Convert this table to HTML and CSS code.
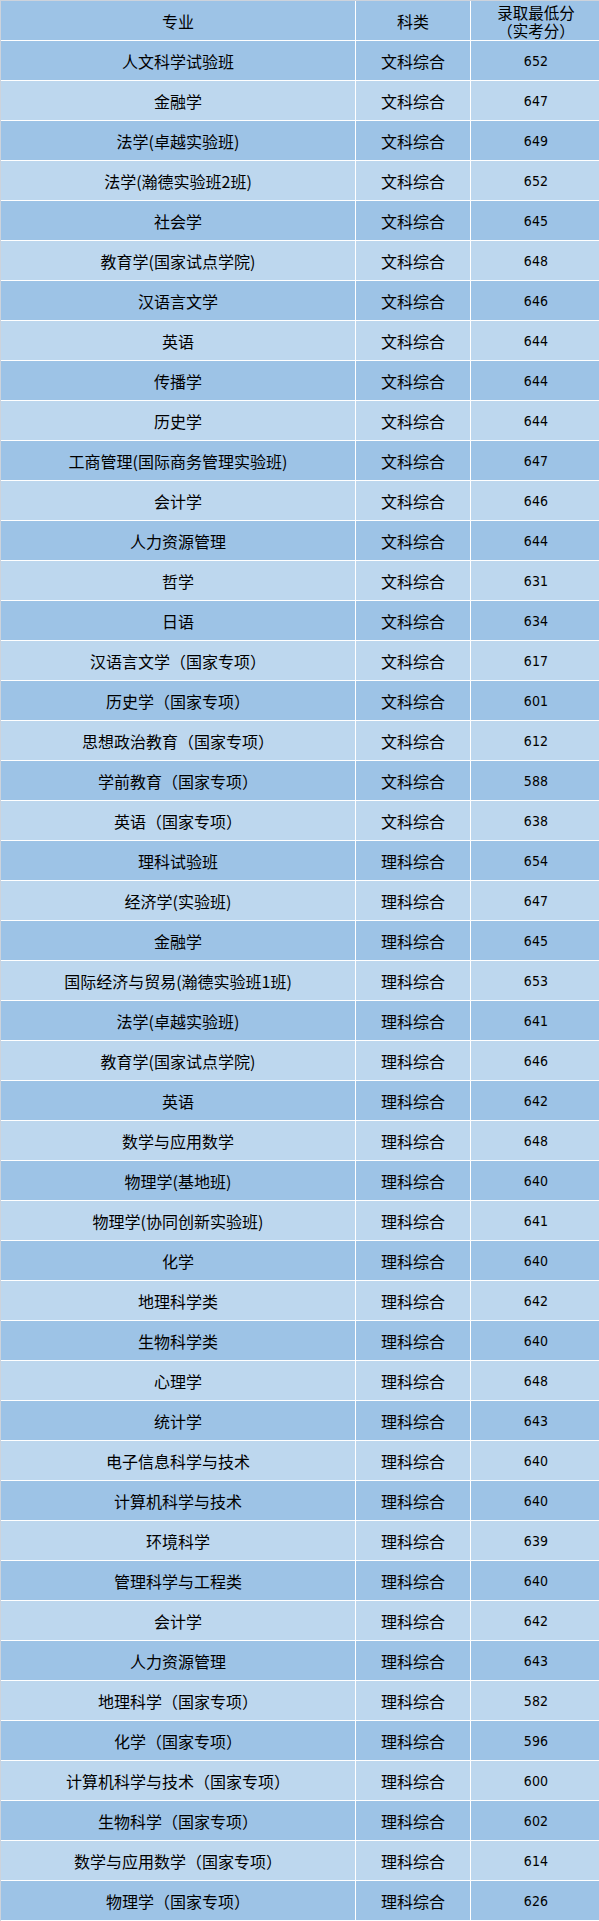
FILE: index.html
```html
<!DOCTYPE html>
<html lang="zh-CN">
<head>
<meta charset="utf-8">
<title>录取最低分</title>
<link rel="stylesheet" href="styles.css">
</head>
<body>
<div class="table">
  <div class="row head"><div class="cell">专业</div><div class="cell">科类</div><div class="cell two"><span class="line">录取最低分</span><span class="line">（实考分）</span></div></div>
  <div class="row"><div class="cell">人文科学试验班</div><div class="cell">文科综合</div><div class="cell num">652</div></div>
  <div class="row"><div class="cell">金融学</div><div class="cell">文科综合</div><div class="cell num">647</div></div>
  <div class="row"><div class="cell">法学(卓越实验班)</div><div class="cell">文科综合</div><div class="cell num">649</div></div>
  <div class="row"><div class="cell">法学(瀚德实验班2班)</div><div class="cell">文科综合</div><div class="cell num">652</div></div>
  <div class="row"><div class="cell">社会学</div><div class="cell">文科综合</div><div class="cell num">645</div></div>
  <div class="row"><div class="cell">教育学(国家试点学院)</div><div class="cell">文科综合</div><div class="cell num">648</div></div>
  <div class="row"><div class="cell">汉语言文学</div><div class="cell">文科综合</div><div class="cell num">646</div></div>
  <div class="row"><div class="cell">英语</div><div class="cell">文科综合</div><div class="cell num">644</div></div>
  <div class="row"><div class="cell">传播学</div><div class="cell">文科综合</div><div class="cell num">644</div></div>
  <div class="row"><div class="cell">历史学</div><div class="cell">文科综合</div><div class="cell num">644</div></div>
  <div class="row"><div class="cell">工商管理(国际商务管理实验班)</div><div class="cell">文科综合</div><div class="cell num">647</div></div>
  <div class="row"><div class="cell">会计学</div><div class="cell">文科综合</div><div class="cell num">646</div></div>
  <div class="row"><div class="cell">人力资源管理</div><div class="cell">文科综合</div><div class="cell num">644</div></div>
  <div class="row"><div class="cell">哲学</div><div class="cell">文科综合</div><div class="cell num">631</div></div>
  <div class="row"><div class="cell">日语</div><div class="cell">文科综合</div><div class="cell num">634</div></div>
  <div class="row"><div class="cell">汉语言文学（国家专项）</div><div class="cell">文科综合</div><div class="cell num">617</div></div>
  <div class="row"><div class="cell">历史学（国家专项）</div><div class="cell">文科综合</div><div class="cell num">601</div></div>
  <div class="row"><div class="cell">思想政治教育（国家专项）</div><div class="cell">文科综合</div><div class="cell num">612</div></div>
  <div class="row"><div class="cell">学前教育（国家专项）</div><div class="cell">文科综合</div><div class="cell num">588</div></div>
  <div class="row"><div class="cell">英语（国家专项）</div><div class="cell">文科综合</div><div class="cell num">638</div></div>
  <div class="row"><div class="cell">理科试验班</div><div class="cell">理科综合</div><div class="cell num">654</div></div>
  <div class="row"><div class="cell">经济学(实验班)</div><div class="cell">理科综合</div><div class="cell num">647</div></div>
  <div class="row"><div class="cell">金融学</div><div class="cell">理科综合</div><div class="cell num">645</div></div>
  <div class="row"><div class="cell">国际经济与贸易(瀚德实验班1班)</div><div class="cell">理科综合</div><div class="cell num">653</div></div>
  <div class="row"><div class="cell">法学(卓越实验班)</div><div class="cell">理科综合</div><div class="cell num">641</div></div>
  <div class="row"><div class="cell">教育学(国家试点学院)</div><div class="cell">理科综合</div><div class="cell num">646</div></div>
  <div class="row"><div class="cell">英语</div><div class="cell">理科综合</div><div class="cell num">642</div></div>
  <div class="row"><div class="cell">数学与应用数学</div><div class="cell">理科综合</div><div class="cell num">648</div></div>
  <div class="row"><div class="cell">物理学(基地班)</div><div class="cell">理科综合</div><div class="cell num">640</div></div>
  <div class="row"><div class="cell">物理学(协同创新实验班)</div><div class="cell">理科综合</div><div class="cell num">641</div></div>
  <div class="row"><div class="cell">化学</div><div class="cell">理科综合</div><div class="cell num">640</div></div>
  <div class="row"><div class="cell">地理科学类</div><div class="cell">理科综合</div><div class="cell num">642</div></div>
  <div class="row"><div class="cell">生物科学类</div><div class="cell">理科综合</div><div class="cell num">640</div></div>
  <div class="row"><div class="cell">心理学</div><div class="cell">理科综合</div><div class="cell num">648</div></div>
  <div class="row"><div class="cell">统计学</div><div class="cell">理科综合</div><div class="cell num">643</div></div>
  <div class="row"><div class="cell">电子信息科学与技术</div><div class="cell">理科综合</div><div class="cell num">640</div></div>
  <div class="row"><div class="cell">计算机科学与技术</div><div class="cell">理科综合</div><div class="cell num">640</div></div>
  <div class="row"><div class="cell">环境科学</div><div class="cell">理科综合</div><div class="cell num">639</div></div>
  <div class="row"><div class="cell">管理科学与工程类</div><div class="cell">理科综合</div><div class="cell num">640</div></div>
  <div class="row"><div class="cell">会计学</div><div class="cell">理科综合</div><div class="cell num">642</div></div>
  <div class="row"><div class="cell">人力资源管理</div><div class="cell">理科综合</div><div class="cell num">643</div></div>
  <div class="row"><div class="cell">地理科学（国家专项）</div><div class="cell">理科综合</div><div class="cell num">582</div></div>
  <div class="row"><div class="cell">化学（国家专项）</div><div class="cell">理科综合</div><div class="cell num">596</div></div>
  <div class="row"><div class="cell">计算机科学与技术（国家专项）</div><div class="cell">理科综合</div><div class="cell num">600</div></div>
  <div class="row"><div class="cell">生物科学（国家专项）</div><div class="cell">理科综合</div><div class="cell num">602</div></div>
  <div class="row"><div class="cell">数学与应用数学（国家专项）</div><div class="cell">理科综合</div><div class="cell num">614</div></div>
  <div class="row"><div class="cell">物理学（国家专项）</div><div class="cell">理科综合</div><div class="cell num">626</div></div>
</div>
</body>
</html>
```
FILE: styles.css
```css
html, body {
  margin: 0;
  padding: 0;
  background: #ffffff;
}

.table {
  width: 598px;
  display: flex;
  flex-direction: column;
  gap: 1px;
  background: #ffffff;
  border-top: 1px solid #cdd3dc;
  border-left: 1px solid #cdd3dc;
  padding-bottom: 1px;
  font-family: "Noto Sans CJK SC", "Noto Sans", sans-serif;
  font-size: 16px;
  color: #000000;
}

.row {
  display: grid;
  grid-template-columns: 354px 114px 130px;
  column-gap: 1px;
  height: 39px;
}

.cell {
  display: flex;
  align-items: center;
  justify-content: center;
  text-align: center;
  background: #bdd7ee;
  line-height: 18px;
  white-space: nowrap;
}

.row:nth-child(even) .cell {
  background: #9dc3e6;
}

.row.head .cell {
  background: #9dc3e6;
}

.cell.two {
  flex-direction: column;
  gap: 0;
}

.cell.two .line {
  display: block;
  height: 18px;
  line-height: 18px;
  font-size: 15.5px;
  overflow: visible;
}

.cell.num {
  font-family: "DejaVu Sans Condensed", "DejaVu Sans", "Liberation Sans", sans-serif;
  font-stretch: condensed;
  font-size: 14px;
  letter-spacing: 0.2px;
}
```
